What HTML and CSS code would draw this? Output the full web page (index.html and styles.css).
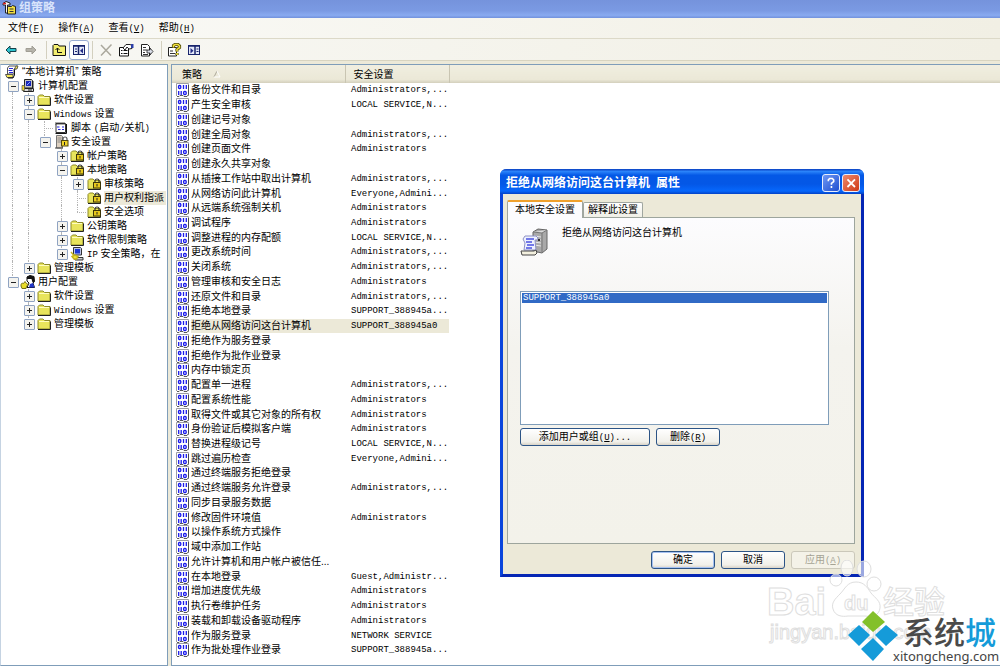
FILE: index.html
```
<!DOCTYPE html>
<html lang="zh-CN">
<head>
<meta charset="utf-8">
<title>组策略</title>
<link rel="stylesheet" href="styles.css">
</head>
<body>
<svg class="symbols" aria-hidden="true">
  <symbol id="bin" viewBox="0 0 14 14">
    <path d="M.5 13V.5H12.5V13" fill="#fff" stroke="#9c9ca4"/>
    <path d="M1 13.500h2l1-1h3l1 1h3l1.500-2V2" fill="none" stroke="#333" stroke-width=".8"/>
    <g fill="none" stroke="#1a1aec" stroke-width="1.300"><rect x="2.500" y="2.500" width="2.300" height="3" rx="1"/><path d="M7.500 2v4M10.300 2v4M2.700 8v4M5.200 8v4"/><rect x="7.600" y="8.500" width="2.600" height="3" rx="1"/></g>
  </symbol>
  <symbol id="folder" viewBox="0 0 16 14">
    <path d="M2 12V3.500L3.500 2H7l1.500 1.500H14V12z" fill="#e8e45c" stroke="#8d8a28"/><path d="M3 4.500h10" stroke="#fffcc0"/><path d="M2 12.500h12.500V4.500" fill="none" stroke="#222"/>
  </symbol>
  <symbol id="lockfolder" viewBox="0 0 16 14">
    <path d="M2 12V3.500L3.500 2H7l1.500 1.500H14V12z" fill="#e8e45c" stroke="#8d8a28"/><path d="M2 12.500h12.500V4.500" fill="none" stroke="#222"/>
    <path d="M9 6V4a2 2 0 0 1 4 0v2" fill="none" stroke="#333" stroke-width="1.200"/><rect x="7.500" y="5.500" width="7" height="5.500" fill="#e8c91c" stroke="#3c3608"/><path d="M11 7v2.500" stroke="#222"/>
  </symbol>
  <symbol id="scroll" viewBox="0 0 16 14">
    <path d="M5 1h8.500L12 4H10v5H3.500V3z" fill="#fff" stroke="#555"/><path d="M5 3.500h4M4.500 5.500h4M5 7.500h4" stroke="#2424d8" stroke-width="1.200"/><path d="M1.500 9.500h7.500v3H3z" fill="#f5e958" stroke="#555"/><path d="M12 1h2l-1 3H10.500z" fill="#f5e958" stroke="#444" stroke-width=".8"/><path d="M10.500 4.500V10L9 13H4" fill="none" stroke="#111"/>
  </symbol>
  <symbol id="computer" viewBox="0 0 16 14">
    <path d="M4.500.5h7l1 1v7.500h-8z" fill="#c6c6c6" stroke="#222"/><rect x="6" y="2" width="5" height="5" fill="#1625bb"/><path d="M7 6l3-3" stroke="#92a8ff"/><path d="M3.500 9.500h10v3h-10z" fill="#d8d8d8" stroke="#222"/><path d="M13 2v7" stroke="#222" fill="none"/><path d="M2 6.500h2.500v5H2z" fill="#efd62c" stroke="#555" stroke-width=".7"/><path d="M8 11h4" stroke="#222"/>
  </symbol>
  <symbol id="user" viewBox="0 0 16 14">
    <path d="M7 2l3-1.500 4 1 .5 5L13 8l1.500 4.500H7L9 8 7 6z" fill="#fff" stroke="#111"/><path d="M7 1.500L10 .5l4 1 .5 5.500-2 .5-1-3.500H7z" fill="#111"/><path d="M10 9l3-1 1.500 4.500H9z" fill="#2236c8"/><path d="M1 11c0-3 1-3 2.500-2.500L5 6.500l1.500 2 1.500 1-1.500 2-.5 2H2z" fill="#e9dd2a" stroke="#777013"/>
  </symbol>
  <symbol id="script" viewBox="0 0 16 14">
    <path d="M3 2.500h9.500v9H3z" fill="#fff" stroke="#333"/><path d="M3 1v3M5 1v3M7 1v3M9 1v3M11 1v3" stroke="#333" stroke-width=".8"/><path d="M4 6h2.500M5 8.500h2.500M9 6h2M9 8.500h2" stroke="#2424d8" stroke-width="1.200"/><path d="M13.500 3v9.500H2.500" fill="none" stroke="#111"/>
  </symbol>
  <symbol id="server" viewBox="0 0 16 14">
    <path d="M3.500.5h5l1 1V13h-6z" fill="#ddd0c0" stroke="#777"/><path d="M4.500 3h4M4.500 5h4M4.500 7h4" stroke="#888"/><path d="M2 13h8" stroke="#444"/><path d="M10 6V4a2 2 0 0 1 4 0v2" fill="none" stroke="#555" stroke-width="1.200"/><rect x="8.500" y="5.500" width="6.500" height="5.500" fill="#efd42a" stroke="#51470b"/><path d="M11.500 7v3" stroke="#222"/>
  </symbol>
  <symbol id="ipsec" viewBox="0 0 16 14">
    <path d="M4.500.5h7l1 1V8h-8z" fill="#bcc4e8" stroke="#333"/><rect x="6" y="2" width="5" height="4.500" fill="#1c39d6"/><path d="M5 10.500h9v2.500H6z" fill="#ccc" stroke="#333"/><path d="M2 5l3 3.500M3 9.500l3-1.500 3 1.500L7.500 12H5z" fill="#f3e337" stroke="#c4b41b" stroke-width="1.400"/>
  </symbol>
</svg>

<div class="window">
  <header class="titlebar">
    <svg class="app-icon" viewBox="0 0 14 14" aria-hidden="true"><path d="M1 2.500L4 .5l4 1.500v2H5.500v8h-2V4H1z" fill="#f4f4f4" stroke="#222"/><path d="M1 2.500h3" stroke="#d22" stroke-width="1.500"/><path d="M6.500 5.500h3l1-1 3 1V13h-8V6z" fill="#f2df42" stroke="#222"/><path d="M7.500 8h4M7.500 10.500h4" stroke="#333"/></svg>
    <h1>组策略</h1>
  </header>
  <nav class="menubar">
    <button>文件<span class="latin">(<u>F</u>)</span></button>
    <button>操作<span class="latin">(<u>A</u>)</span></button>
    <button>查看<span class="latin">(<u>V</u>)</span></button>
    <button>帮助<span class="latin">(<u>H</u>)</span></button>
  </nav>
  <div class="toolbar">
    <button aria-label="后退"><svg viewBox="0 0 16 14"><path d="M3 7l4-4v2.500h6v3H7V11z" fill="#2cc3cf" stroke="#143f48"/></svg></button>
    <button aria-label="前进"><svg viewBox="0 0 16 14"><path d="M13 7L9 3v2.500H3v3h6V11z" fill="#b5b3aa" stroke="#a09e94"/></svg></button>
    <i class="sep wide-sep"></i>
    <button aria-label="向上"><svg viewBox="0 0 16 14"><path d="M2 12.500v-10L3 1.500h4l1 1.500h6.500v9.500z" fill="#f3ee70" stroke="#111"/><path d="M6.500 5v4.500H11M4.500 7l2-2 2 2" fill="none" stroke="#111"/></svg></button>
    <button class="pressed" aria-label="显示树"><svg viewBox="0 0 16 14"><rect x="2.500" y="2.500" width="11" height="9" fill="#e4e9f8" stroke="#19246c"/><path d="M2 3h12M7.500 3v9" stroke="#19246c" stroke-width="1.500"/><path d="M4 6h2M4 8.500h2" stroke="#19246c"/><path d="M12 5v5.500L9 7.700z" fill="#222b86"/></svg></button>
    <i class="sep"></i>
    <button aria-label="删除"><svg viewBox="0 0 16 14"><path d="M3 2l10 10.500M13.500 1.500L3 12.500" stroke="#aaa89d" stroke-width="1.500"/></svg></button>
    <button aria-label="属性"><svg viewBox="0 0 16 14"><path d="M1.500 4.500h9v8.500h-9z" fill="#fff" stroke="#111"/><path d="M3 7.500h1.500M5.500 7.500h4M3 10.500h1.500M5.500 10.500h4" stroke="#111"/><path d="M5 5l3-3.500h4l2 1v3L11 6 9 4 7 7z" fill="#fff" stroke="#222"/><path d="M13 1h2.500v4H13z" fill="#2d40a8"/></svg></button>
    <button aria-label="导出列表"><svg viewBox="0 0 16 14"><path d="M3.500 1.500h6l2 2V13h-8z" fill="#fff" stroke="#222"/><path d="M5 4.500h3M5 7h4M5 9.500h2M5 11.500h5" stroke="#333"/><path d="M9 7h3V5l3 3.500-3 3.500v-2H9z" fill="#d9dde8" stroke="#222" stroke-width=".8"/></svg></button>
    <i class="sep wide-sep"></i>
    <button aria-label="帮助"><svg viewBox="0 0 16 14"><path d="M2.500 4.500h8V13h-8z" fill="#fff" stroke="#222"/><path d="M4 8h3M4 10.500h5" stroke="#333"/><path d="M7.500 4.500V2.500l1.500-1h3l1.500 1.500v1.500L11 6.500v2M11 10v2" fill="none" stroke="#4f4708" stroke-width="3.200"/><path d="M7.500 4.500V2.500l1.500-1h3l1.500 1.500v1.500L11 6.500v2M11 10v2" fill="none" stroke="#efdf3a" stroke-width="1.600"/></svg></button>
    <button aria-label="显示操作窗格"><svg viewBox="0 0 16 14"><rect x="2.500" y="2.500" width="11" height="9" fill="#e4e9f8" stroke="#19246c"/><path d="M2 3h12M9 3v9" stroke="#19246c" stroke-width="1.500"/><path d="M10.500 6h2M10.500 8.500h2" stroke="#19246c"/><path d="M4.500 5v5.500l3-2.700z" fill="#222b86"/></svg></button>
  </div>

  <main class="workspace">
    <ul class="tree" role="tree">
      <li class="root"><svg class="ico"><use href="#scroll"/></svg><span>“本地计算机” 策略</span></li>
      <li><button class="box minus first"></button><svg class="ico"><use href="#computer"/></svg><span>计算机配置</span></li>
      <li><i class="line"></i><button class="box plus"></button><svg class="ico"><use href="#folder"/></svg><span>软件设置</span></li>
      <li><i class="line"></i><button class="box minus"></button><svg class="ico"><use href="#folder"/></svg><span><span class="latin">Windows</span> 设置</span></li>
      <li><i class="line"></i><i class="line"></i><i class="line tee"></i><svg class="ico"><use href="#script"/></svg><span>脚本 <span class="latin">(</span>启动<span class="latin">/</span>关机<span class="latin">)</span></span></li>
      <li><i class="line"></i><i class="line"></i><button class="box minus last"></button><svg class="ico"><use href="#server"/></svg><span>安全设置</span></li>
      <li><i class="line"></i><i class="line"></i><i></i><button class="box plus"></button><svg class="ico"><use href="#lockfolder"/></svg><span>帐户策略</span></li>
      <li><i class="line"></i><i class="line"></i><i></i><button class="box minus"></button><svg class="ico"><use href="#lockfolder"/></svg><span>本地策略</span></li>
      <li><i class="line"></i><i class="line"></i><i></i><i class="line"></i><button class="box plus"></button><svg class="ico"><use href="#lockfolder"/></svg><span>审核策略</span></li>
      <li><i class="line"></i><i class="line"></i><i></i><i class="line"></i><i class="line tee"></i><svg class="ico"><use href="#lockfolder"/></svg><span class="current">用户权利指派</span></li>
      <li><i class="line"></i><i class="line"></i><i></i><i class="line"></i><i class="line tee last"></i><svg class="ico"><use href="#lockfolder"/></svg><span>安全选项</span></li>
      <li><i class="line"></i><i class="line"></i><i></i><button class="box plus"></button><svg class="ico"><use href="#folder"/></svg><span>公钥策略</span></li>
      <li><i class="line"></i><i class="line"></i><i></i><button class="box plus"></button><svg class="ico"><use href="#folder"/></svg><span>软件限制策略</span></li>
      <li><i class="line"></i><i class="line"></i><i></i><button class="box plus last"></button><svg class="ico"><use href="#ipsec"/></svg><span><span class="latin">IP</span> 安全策略，在</span></li>
      <li><i class="line"></i><button class="box plus last"></button><svg class="ico"><use href="#folder"/></svg><span>管理模板</span></li>
      <li><button class="box minus last"></button><svg class="ico"><use href="#user"/></svg><span>用户配置</span></li>
      <li><i></i><button class="box plus"></button><svg class="ico"><use href="#folder"/></svg><span>软件设置</span></li>
      <li><i></i><button class="box plus"></button><svg class="ico"><use href="#folder"/></svg><span><span class="latin">Windows</span> 设置</span></li>
      <li><i></i><button class="box plus last"></button><svg class="ico"><use href="#folder"/></svg><span>管理模板</span></li>
    </ul>

    <section class="list">
      <table>
        <colgroup><col class="c-name"><col class="c-set"><col></colgroup>
        <thead><tr><th>策略 <svg class="sort" viewBox="0 0 8 8"><path d="M1 7l3-6" stroke="#aca899"/><path d="M4 1l3 6H1" stroke="#fff" fill="none"/></svg></th><th>安全设置</th><th></th></tr></thead>
        <tbody>
          <tr><td><svg><use href="#bin"/></svg><span>备份文件和目录</span></td><td>Administrators,...</td></tr>
          <tr><td><svg><use href="#bin"/></svg><span>产生安全审核</span></td><td>LOCAL SERVICE,N...</td></tr>
          <tr><td><svg><use href="#bin"/></svg><span>创建记号对象</span></td><td></td></tr>
          <tr><td><svg><use href="#bin"/></svg><span>创建全局对象</span></td><td>Administrators,...</td></tr>
          <tr><td><svg><use href="#bin"/></svg><span>创建页面文件</span></td><td>Administrators</td></tr>
          <tr><td><svg><use href="#bin"/></svg><span>创建永久共享对象</span></td><td></td></tr>
          <tr><td><svg><use href="#bin"/></svg><span>从插接工作站中取出计算机</span></td><td>Administrators,...</td></tr>
          <tr><td><svg><use href="#bin"/></svg><span>从网络访问此计算机</span></td><td>Everyone,Admini...</td></tr>
          <tr><td><svg><use href="#bin"/></svg><span>从远端系统强制关机</span></td><td>Administrators</td></tr>
          <tr><td><svg><use href="#bin"/></svg><span>调试程序</span></td><td>Administrators</td></tr>
          <tr><td><svg><use href="#bin"/></svg><span>调整进程的内存配额</span></td><td>LOCAL SERVICE,N...</td></tr>
          <tr><td><svg><use href="#bin"/></svg><span>更改系统时间</span></td><td>Administrators,...</td></tr>
          <tr><td><svg><use href="#bin"/></svg><span>关闭系统</span></td><td>Administrators,...</td></tr>
          <tr><td><svg><use href="#bin"/></svg><span>管理审核和安全日志</span></td><td>Administrators</td></tr>
          <tr><td><svg><use href="#bin"/></svg><span>还原文件和目录</span></td><td>Administrators,...</td></tr>
          <tr><td><svg><use href="#bin"/></svg><span>拒绝本地登录</span></td><td>SUPPORT_388945a...</td></tr>
          <tr class="selected"><td><svg><use href="#bin"/></svg><span>拒绝从网络访问这台计算机</span></td><td>SUPPORT_388945a0</td></tr>
          <tr><td><svg><use href="#bin"/></svg><span>拒绝作为服务登录</span></td><td></td></tr>
          <tr><td><svg><use href="#bin"/></svg><span>拒绝作为批作业登录</span></td><td></td></tr>
          <tr><td><svg><use href="#bin"/></svg><span>内存中锁定页</span></td><td></td></tr>
          <tr><td><svg><use href="#bin"/></svg><span>配置单一进程</span></td><td>Administrators,...</td></tr>
          <tr><td><svg><use href="#bin"/></svg><span>配置系统性能</span></td><td>Administrators</td></tr>
          <tr><td><svg><use href="#bin"/></svg><span>取得文件或其它对象的所有权</span></td><td>Administrators</td></tr>
          <tr><td><svg><use href="#bin"/></svg><span>身份验证后模拟客户端</span></td><td>Administrators</td></tr>
          <tr><td><svg><use href="#bin"/></svg><span>替换进程级记号</span></td><td>LOCAL SERVICE,N...</td></tr>
          <tr><td><svg><use href="#bin"/></svg><span>跳过遍历检查</span></td><td>Everyone,Admini...</td></tr>
          <tr><td><svg><use href="#bin"/></svg><span>通过终端服务拒绝登录</span></td><td></td></tr>
          <tr><td><svg><use href="#bin"/></svg><span>通过终端服务允许登录</span></td><td>Administrators,...</td></tr>
          <tr><td><svg><use href="#bin"/></svg><span>同步目录服务数据</span></td><td></td></tr>
          <tr><td><svg><use href="#bin"/></svg><span>修改固件环境值</span></td><td>Administrators</td></tr>
          <tr><td><svg><use href="#bin"/></svg><span>以操作系统方式操作</span></td><td></td></tr>
          <tr><td><svg><use href="#bin"/></svg><span>域中添加工作站</span></td><td></td></tr>
          <tr><td><svg><use href="#bin"/></svg><span>允许计算机和用户帐户被信任...</span></td><td></td></tr>
          <tr><td><svg><use href="#bin"/></svg><span>在本地登录</span></td><td>Guest,Administr...</td></tr>
          <tr><td><svg><use href="#bin"/></svg><span>增加进度优先级</span></td><td>Administrators</td></tr>
          <tr><td><svg><use href="#bin"/></svg><span>执行卷维护任务</span></td><td>Administrators</td></tr>
          <tr><td><svg><use href="#bin"/></svg><span>装载和卸载设备驱动程序</span></td><td>Administrators</td></tr>
          <tr><td><svg><use href="#bin"/></svg><span>作为服务登录</span></td><td>NETWORK SERVICE</td></tr>
          <tr><td><svg><use href="#bin"/></svg><span>作为批处理作业登录</span></td><td>SUPPORT_388945a...</td></tr>
        </tbody>
      </table>
    </section>
  </main>
</div>

<section class="dialog" role="dialog" aria-labelledby="dlg-title">
  <header class="dialog-title">
    <h2 id="dlg-title">拒绝从网络访问这台计算机&ensp;属性</h2>
    <button class="cap help" aria-label="帮助"><svg viewBox="0 0 18 18"><path d="M6 7V5.500L7.500 4h3L12 5.500v2L9.500 9.500V11M9.500 12.500v2" fill="none" stroke="#fff" stroke-width="1.800"/></svg></button>
    <button class="cap close" aria-label="关闭"><svg viewBox="0 0 18 18"><path d="M5 5l8.500 8.500M13.500 5L5 13.500" stroke="#fff" stroke-width="2"/></svg></button>
  </header>
  <div class="dialog-body">
    <div class="tabs" role="tablist">
      <button class="tab active" role="tab" aria-selected="true">本地安全设置</button>
      <button class="tab" role="tab">解释此设置</button>
    </div>
    <div class="page">
      <div class="intro">
        <svg viewBox="0 0 28 28" aria-hidden="true"><path d="M13 4l5-3 9 1v19l-5 4-9-2z" fill="#a9a9a9" stroke="#666"/><path d="M13 4l9 1 5-3" fill="#ddd" stroke="#777"/><path d="M22 5v19" stroke="#777"/><path d="M14 8l7 1M14 11l7 1M14 14l7 1M14 17l7 1" stroke="#e8e8e8"/><path d="M18 11h2v2h-2z" fill="#333"/><path d="M5 8h11l2 2-1 2h-2l1 10H4l1-7-2-4z" fill="#edf0ff" stroke="#8d91c4"/><path d="M6 11h8M6 14h6M7 17h7M6 20h6" stroke="#4a52e0" stroke-width="1.400"/><path d="M1 23h13l2-1 1 3-2 2H2z" fill="#f3f0df" stroke="#444"/></svg>
        <label for="accounts">拒绝从网络访问这台计算机</label>
      </div>
      <select id="accounts" size="8"><option selected>SUPPORT_388945a0</option></select>
      <div class="row">
        <button class="btn wide">添加用户或组<span class="latin">(<u>U</u>)...</span></button>
        <button class="btn">删除<span class="latin">(<u>R</u>)</span></button>
      </div>
    </div>
    <footer class="row actions">
      <button class="btn default">确定</button>
      <button class="btn">取消</button>
      <button class="btn" disabled>应用<span class="latin">(<u>A</u>)</span></button>
    </footer>
  </div>
</section>

<aside class="watermark">
  <svg class="baidu" viewBox="0 0 190 84">
    <g class="outline">
      <circle cx="71" cy="20" r="6"/><ellipse cx="82" cy="8" rx="6" ry="8"/><ellipse cx="99" cy="9" rx="7" ry="8"/><circle cx="109" cy="24" r="7"/>
      <path d="M91 22c-9 0-11 7-16 12s-9 9-7 15c2 7 9 8 15 7h17c7 1 14 0 15-8 1-7-5-10-9-15-4-6-7-11-15-11z"/>
      <text x="2" y="55" class="bai">Bai</text><text x="79" y="50" class="du">du</text><text x="118" y="53" class="jy">经验</text>
      <text x="5" y="79" class="url">jingyan.baidu.com</text>
    </g>
  </svg>
  <svg class="xtc" viewBox="0 0 154 58">
    <path d="M27 3l12 11-12 10-11-10z" fill="#83c02a"/><path d="M13 17l11 10-11 11L2 27zM40 17l12 10-12 11-11-11zM27 30l11 11-11 12-12-12z" fill="#159bd9"/>
    <text x="57" y="36" class="name">系统<tspan class="blue">城</tspan></text><text x="47" y="53" class="site">xitongcheng.com</text>
  </svg>
</aside>
</body>
</html>
```

FILE: styles.css
```
* { box-sizing: border-box; }
body {
  margin: 0;
  height: 100vh;
  overflow: hidden;
  background: #ece9d8;
  color: #000;
  font: 10px/14px "Liberation Sans", "Noto Sans CJK SC", sans-serif;
}
h1, h2, ul { margin: 0; padding: 0; }
button { font: inherit; color: inherit; border: 0; padding: 0; background: none; }
svg { display: block; flex: none; }
.symbols { position: absolute; width: 0; height: 0; }
.latin { font-family: "Liberation Mono", monospace; font-size: 9px; }

.window { display: flex; flex-direction: column; height: 100%; }
.titlebar {
  display: flex; align-items: center; gap: 3px;
  height: 18px; padding: 0 2px 3px;
  background: linear-gradient(#7593dc, #7b9ae3 60%, #89aaf0 85%, #7191dc);
}
.app-icon { width: 14px; height: 14px; }
.titlebar h1 { font-size: 12px; line-height: 14px; font-weight: 700; color: #d9e4fb; }
.menubar {
  display: flex; gap: 14px; align-items: center; height: 21px; padding: 1px 8px 0;
  border-bottom: 1px solid #dcd9c8;
  background: linear-gradient(90deg, #fafaf7, #f1efe4);
  white-space: nowrap;
}
.toolbar {
  display: flex; align-items: center; height: 22px; padding: 0 1px;
  background: linear-gradient(90deg, #f8f8f4, #f1efe4);
  border-bottom: 1px solid #d8d4c0;
}
.toolbar button { width: 20px; height: 20px; padding: 3px 2px; }
.toolbar svg { width: 16px; height: 14px; }
.toolbar .pressed { background: #fff; border: 1px solid #98abd2; border-radius: 3px; padding: 2px 1px; }
.sep { width: 1px; height: 18px; margin: 0 3px; background: #d3d0bf; }
.wide-sep { margin-left: 5px; margin-right: 2px; }

.workspace { flex: 1; min-height: 0; display: flex; gap: 3px; padding-top: 3px; }
.tree {
  width: 168px; flex: none; overflow: hidden; list-style: none;
  background: #fff; border: 1px solid #7f9db9; border-left-color: #c5d3e2; padding-left: 3px;
}
.tree li { display: flex; align-items: center; height: 14px; white-space: nowrap; }
.tree li > span { margin-left: 2px; padding-right: 2px; }
.tree .current { background: #ece9d8; }
.tree .ico { width: 16px; height: 14px; }
.tree li > i, .box { position: relative; flex: none; width: 16px; height: 14px; }
.tree li > :is(i, .box):nth-child(2n+3) { width: 17px; }
.line::before, .box::before {
  content: ""; position: absolute; left: 8px; top: 0; bottom: 0; border-left: 1px dotted #b4b4b4;
}
.first::before { top: 7px; }
.last::before { bottom: 7px; }
.tee::after { content: ""; position: absolute; left: 8px; right: 0; top: 7px; border-top: 1px dotted #b4b4b4; }
.box::after {
  content: ""; position: absolute; left: 4px; top: 2px; width: 9px; height: 9px;
  border: 1px solid #8fa3c2; border-radius: 1px;
  background: linear-gradient(#222, #222) center / 5px 1px no-repeat, #f4f3ee;
}
.plus::after {
  background: linear-gradient(#222, #222) center / 5px 1px no-repeat, linear-gradient(#222, #222) center / 1px 5px no-repeat, #f4f3ee;
}

.list { flex: 1; min-width: 0; background: #fff; border: 1px solid #7f9db9; border-right: 0; padding-bottom: 7px; }
table { width: 100%; height: 100%; table-layout: fixed; border-collapse: collapse; }
.c-name { width: 173px; }
.c-set { width: 104px; }
th {
  height: 18px; padding: 1px 0 0 10px; text-align: left; font-weight: 400; line-height: 14px;
  background: linear-gradient(#f0eee0, #ebe8d7 80%, #d3cfbc); border-right: 1px solid #c9c5b2;
}
th + th { padding-left: 8px; }
th:last-child { border-right: 0; }
.sort { display: inline-block; width: 8px; height: 8px; margin-left: 8px; }
td { padding: 0; white-space: nowrap; line-height: 14px; }
td:first-child { padding-left: 4px; }
td svg { float: left; width: 14px; height: 14px; }
td span { display: block; margin-left: 15px; }
td:nth-child(2) { padding-left: 6px; font-family: "Liberation Mono", monospace; font-size: 9px; }
.selected td:first-child { background: linear-gradient(#ece9d8, #ece9d8) 19px 0 no-repeat; }
.selected td:nth-child(2) { background: #ece9d8; }

.dialog {
  position: absolute; left: 500px; top: 169px; width: 364px;
  border: 3px solid #0a45dc; border-top: 0; border-right-color: #0526b4; border-bottom-color: #0526b4;
  border-radius: 7px 7px 0 0; background: #ece9d8;
}
.dialog-title {
  display: flex; align-items: center; gap: 2px; height: 25px; margin: 0 -3px; padding: 2px 4px 0 6px;
  border-radius: 6px 6px 0 0;
  background: linear-gradient(#0a3fc0, #2a83fa 10%, #0458e6 25%, #0457e6 60%, #0667fc 88%, #0342c6);
}
.dialog-title h2 { flex: 1; font-size: 12px; line-height: 16px; font-weight: 700; color: #fff; }
.cap { width: 18px; height: 18px; border: 1px solid #e8eefc; border-radius: 3px; }
.help { background: linear-gradient(135deg, #6f98f4, #1f4fd0); }
.close { background: linear-gradient(135deg, #ee8a6c, #cf3a16); }
.cap svg { width: 16px; height: 16px; }
.dialog-body { padding: 6px 6px 4px 4px; }
.tabs { display: flex; align-items: flex-end; }
.tab {
  height: 15px; padding: 0 4px; background: linear-gradient(#fff, #f0efe6);
  border: 1px solid #a0a6a0; border-bottom: 0; border-radius: 2px 2px 0 0;
}
.tab.active { position: relative; height: 18px; margin-bottom: -1px; padding: 0 7px; background: #fcfcfe; border-top: 2px solid #f0a12c; }
.page {
  border: 1px solid #9da59d; padding: 10px 25px 97px 12px;
  background: linear-gradient(#fcfcfe, #f4f3ee 40%, #f3f2ea);
}
.intro { display: flex; gap: 14px; min-height: 63px; }
.intro svg { width: 28px; height: 28px; }
.intro label { line-height: 10px; }
select {
  display: block; width: 100%; height: 134px; padding: 1px; overflow: hidden;
  border: 1px solid #7f9db9; border-radius: 0; background: #fff; outline: 0;
  font: 9px/10px "Liberation Mono", monospace;
}
option { padding: 0 1px; min-height: 10px; }
option:checked { background: linear-gradient(#316ac5, #316ac5); color: #fff; -webkit-text-fill-color: #fff; }
.row { display: flex; gap: 6px; margin-top: 3px; }
.btn {
  width: 64px; height: 18px; border: 1px solid #2c5486; border-radius: 3px;
  background: linear-gradient(#fff, #f1f0ea 80%, #d9d3c7); white-space: nowrap; line-height: 14px;
}
.wide { width: 130px; }
.default { box-shadow: inset 0 0 0 1px #a6c1f0; }
.btn:disabled { color: #a5a394; border-color: #cbc8ba; background: #f4f2e8; }
.actions { justify-content: flex-end; margin-top: 7px; padding-bottom: 1px; }

.watermark { position: absolute; right: 0; bottom: 0; width: 235px; height: 106px; }
.baidu { position: absolute; left: 0; top: 0; width: 190px; height: 84px; }
.outline { fill: #fff; fill-opacity: .6; stroke: #dedede; stroke-width: 1; }
.bai { font: 700 38px "Liberation Sans", sans-serif; }
.du { font: 700 20px "Liberation Sans", sans-serif; }
.jy { font: 500 31px "Noto Sans CJK SC", sans-serif; }
.url { font: 20px "Liberation Sans", sans-serif; }
.xtc { position: absolute; right: 0; bottom: 0; width: 154px; height: 58px; }
.name { font: 500 31px "Noto Sans CJK SC", sans-serif; fill: #4a4a4a; }
.blue { fill: #159bd9; }
.site { font: 13px "Noto Sans", sans-serif; fill: #444; }
```
